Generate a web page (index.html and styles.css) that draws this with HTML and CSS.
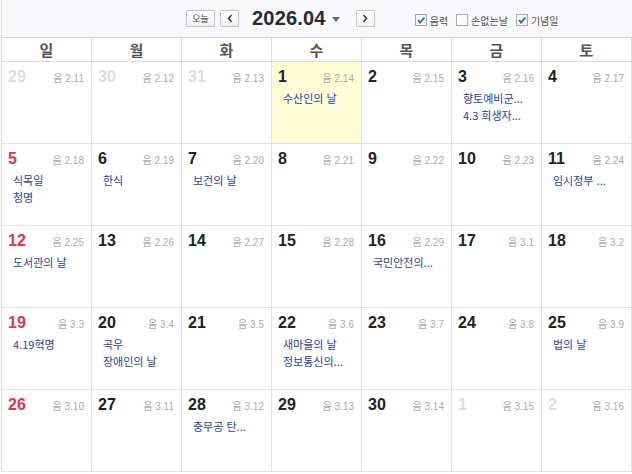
FILE: index.html
```html
<!DOCTYPE html>
<html lang="ko">
<head>
<meta charset="utf-8">
<link rel="stylesheet" href="styles.css">
</head>
<body>
<div class="cal">
  <div class="bar">
    <div class="nav">
      <button class="btn today-btn">오늘</button>
      <button class="btn arrow"><svg width="6" height="9" viewBox="0 0 6 9"><path d="M4.5 1 L1.5 4.5 L4.5 8" fill="none" stroke="#333" stroke-width="1.4"/></svg></button>
      <span class="title">2026.04</span>
      <svg class="caret" width="8" height="5" viewBox="0 0 8 5"><path d="M0 0 H8 L4 5 Z" fill="#666"/></svg>
      <button class="btn arrow"><svg width="6" height="9" viewBox="0 0 6 9"><path d="M1.5 1 L4.5 4.5 L1.5 8" fill="none" stroke="#333" stroke-width="1.4"/></svg></button>
    </div>
    <div class="opts">
      <label class="opt"><span class="cb on"><svg width="10" height="10" viewBox="0 0 10 10"><path d="M2 5 L4 7.5 L8.5 2.5" fill="none" stroke="#2a6db0" stroke-width="1.8"/></svg></span>음력</label>
      <label class="opt"><span class="cb"></span>손없는날</label>
      <label class="opt"><span class="cb on"><svg width="10" height="10" viewBox="0 0 10 10"><path d="M2 5 L4 7.5 L8.5 2.5" fill="none" stroke="#2a6db0" stroke-width="1.8"/></svg></span>기념일</label>
    </div>
  </div>
  <div class="grid">
    <div class="dh">일</div><div class="dh">월</div><div class="dh">화</div><div class="dh">수</div><div class="dh">목</div><div class="dh">금</div><div class="dh">토</div>

    <div class="cell"><div class="top"><span class="num other">29</span><span class="lun">음 2.11</span></div></div>
    <div class="cell"><div class="top"><span class="num other">30</span><span class="lun">음 2.12</span></div></div>
    <div class="cell"><div class="top"><span class="num other">31</span><span class="lun">음 2.13</span></div></div>
    <div class="cell now"><div class="top"><span class="num">1</span><span class="lun">음 2.14</span></div><div class="ev">수산인의 날</div></div>
    <div class="cell"><div class="top"><span class="num">2</span><span class="lun">음 2.15</span></div></div>
    <div class="cell"><div class="top"><span class="num">3</span><span class="lun">음 2.16</span></div><div class="ev">향토예비군...</div><div class="ev">4.3 희생자...</div></div>
    <div class="cell"><div class="top"><span class="num">4</span><span class="lun">음 2.17</span></div></div>

    <div class="cell"><div class="top"><span class="num sun">5</span><span class="lun">음 2.18</span></div><div class="ev">식목일</div><div class="ev">청명</div></div>
    <div class="cell"><div class="top"><span class="num">6</span><span class="lun">음 2.19</span></div><div class="ev">한식</div></div>
    <div class="cell"><div class="top"><span class="num">7</span><span class="lun">음 2.20</span></div><div class="ev">보건의 날</div></div>
    <div class="cell"><div class="top"><span class="num">8</span><span class="lun">음 2.21</span></div></div>
    <div class="cell"><div class="top"><span class="num">9</span><span class="lun">음 2.22</span></div></div>
    <div class="cell"><div class="top"><span class="num">10</span><span class="lun">음 2.23</span></div></div>
    <div class="cell"><div class="top"><span class="num">11</span><span class="lun">음 2.24</span></div><div class="ev">임시정부 ...</div></div>

    <div class="cell"><div class="top"><span class="num sun">12</span><span class="lun">음 2.25</span></div><div class="ev">도서관의 날</div></div>
    <div class="cell"><div class="top"><span class="num">13</span><span class="lun">음 2.26</span></div></div>
    <div class="cell"><div class="top"><span class="num">14</span><span class="lun">음 2.27</span></div></div>
    <div class="cell"><div class="top"><span class="num">15</span><span class="lun">음 2.28</span></div></div>
    <div class="cell"><div class="top"><span class="num">16</span><span class="lun">음 2.29</span></div><div class="ev">국민안전의...</div></div>
    <div class="cell"><div class="top"><span class="num">17</span><span class="lun">음 3.1</span></div></div>
    <div class="cell"><div class="top"><span class="num">18</span><span class="lun">음 3.2</span></div></div>

    <div class="cell"><div class="top"><span class="num sun">19</span><span class="lun">음 3.3</span></div><div class="ev">4.19혁명</div></div>
    <div class="cell"><div class="top"><span class="num">20</span><span class="lun">음 3.4</span></div><div class="ev">곡우</div><div class="ev">장애인의 날</div></div>
    <div class="cell"><div class="top"><span class="num">21</span><span class="lun">음 3.5</span></div></div>
    <div class="cell"><div class="top"><span class="num">22</span><span class="lun">음 3.6</span></div><div class="ev">새마을의 날</div><div class="ev">정보통신의...</div></div>
    <div class="cell"><div class="top"><span class="num">23</span><span class="lun">음 3.7</span></div></div>
    <div class="cell"><div class="top"><span class="num">24</span><span class="lun">음 3.8</span></div></div>
    <div class="cell"><div class="top"><span class="num">25</span><span class="lun">음 3.9</span></div><div class="ev">법의 날</div></div>

    <div class="cell"><div class="top"><span class="num sun">26</span><span class="lun">음 3.10</span></div></div>
    <div class="cell"><div class="top"><span class="num">27</span><span class="lun">음 3.11</span></div></div>
    <div class="cell"><div class="top"><span class="num">28</span><span class="lun">음 3.12</span></div><div class="ev">충무공 탄...</div></div>
    <div class="cell"><div class="top"><span class="num">29</span><span class="lun">음 3.13</span></div></div>
    <div class="cell"><div class="top"><span class="num">30</span><span class="lun">음 3.14</span></div></div>
    <div class="cell"><div class="top"><span class="num other">1</span><span class="lun">음 3.15</span></div></div>
    <div class="cell"><div class="top"><span class="num other">2</span><span class="lun">음 3.16</span></div></div>
  </div>
</div>
</body>
</html>
```
FILE: styles.css
```css
* { box-sizing: border-box; }
html, body { margin: 0; padding: 0; background: #fff; }
body { font-family: "Liberation Sans", "Noto Sans CJK KR", sans-serif; color: #222; }

.cal {
  width: 631px;
  margin-left: 1px;
  border-left: 1px solid #dcdcdc;
}

.bar {
  height: 38px;
  background: #f8f8fa;
  border-bottom: 1px solid #d4d4d8;
  display: flex;
  align-items: center;
  padding-left: 184px;
}

.nav { display: flex; align-items: center; }

.btn {
  height: 17px;
  padding: 0;
  border: 1px solid #c4c4c8;
  border-radius: 1px;
  background: linear-gradient(#ffffff, #f1f1f3);
  font-family: "Noto Sans CJK KR", sans-serif;
  font-size: 9px;
  color: #444;
  display: flex;
  align-items: center;
  justify-content: center;
  line-height: 1;
}
.today-btn { width: 29px; }
.arrow { width: 19px; margin-left: 5px; }

.title {
  font-family: "Liberation Sans", "DejaVu Sans", sans-serif;
  font-weight: bold;
  font-size: 20px;
  color: #292a3a;
  margin-left: 13px;
  letter-spacing: 0.2px;
}
.caret { margin-left: 6px; margin-right: 8px; margin-top: 1px; }
.nav .arrow:last-child { margin-left: 8px; }

.opts { display: flex; align-items: center; margin-left: 40px; margin-top: 3px; }
.opt {
  display: flex;
  align-items: center;
  font-family: "Noto Sans CJK KR", sans-serif;
  font-size: 10px;
  color: #555;
  margin-right: 8px;
}
.cb {
  width: 12px;
  height: 12px;
  border: 1px solid #a9a9ae;
  background: #fff;
  margin-right: 3px;
  display: flex;
  align-items: center;
  justify-content: center;
}
.cb.on { background: #f4f6fa; }

.grid {
  display: grid;
  grid-template-columns: repeat(7, 90px);
  grid-template-rows: 24px repeat(5, 82px);
}

.dh {
  border-right: 1px solid #e0e0e0;
  border-bottom: 1px solid #dcdcdc;
  text-align: center;
  font-family: "Noto Sans CJK KR", sans-serif;
  font-weight: bold;
  font-size: 15px;
  color: #555;
  line-height: 23px;
}

.cell {
  border-right: 1px solid #e2e2e2;
  border-bottom: 1px solid #e2e2e2;
  padding: 6px 7px 0 6px;
}
.cell.now { background: #fefed6; border-right-color: #e6e6c8; }

.top {
  display: flex;
  justify-content: space-between;
  align-items: baseline;
  height: 22px;
}
.num {
  font-weight: bold;
  font-size: 16px;
  color: #222;
}
.num.other { color: #dedede; }
.num.sun { color: #e8334a; }
.lun {
  font-family: "Liberation Sans", "Noto Sans CJK KR", sans-serif;
  font-size: 10px;
  color: #ababab;
}

.ev {
  font-family: "Noto Sans CJK KR", sans-serif;
  font-size: 11px;
  line-height: 17px;
  color: #2a40a4;
  padding-left: 5px;
  white-space: nowrap;
}
```
